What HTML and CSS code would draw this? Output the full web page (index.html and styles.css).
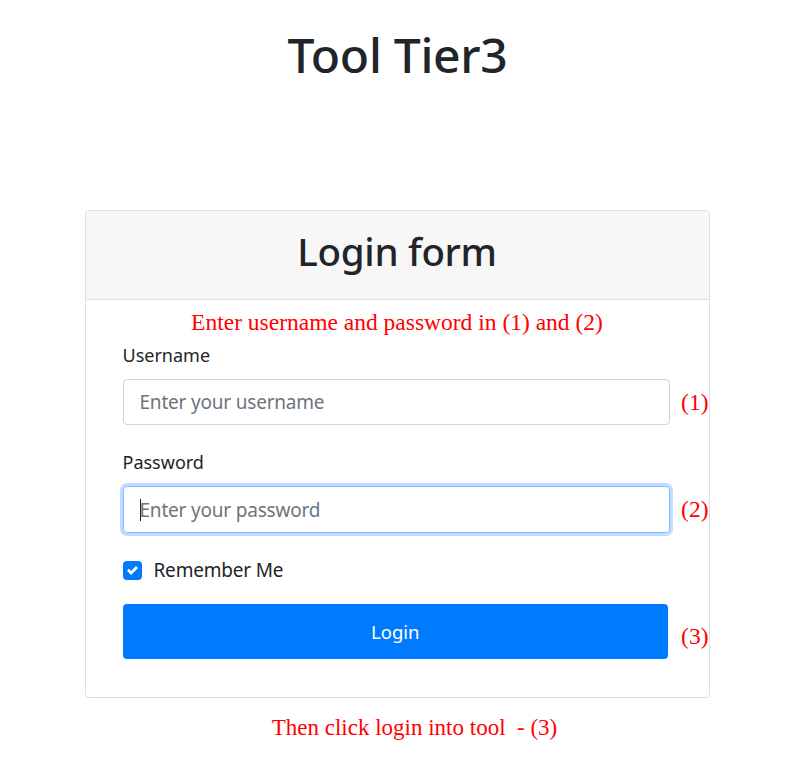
FILE: index.html
```html
<!DOCTYPE html>
<html>
<head>
<meta charset="utf-8">
<link rel="stylesheet" href="styles.css">
</head>
<body>
<div class="page">
  <h1 class="title">Tool Tier3</h1>
  <div class="card">
    <div class="card-header"><h2 class="card-title">Login form</h2></div>
    <div class="card-body">
      <p class="hint">Enter username and password in (1) and (2)</p>
      <div class="group first">
        <label class="label">Username</label>
        <div class="row">
          <div class="input"><span class="placeholder">Enter your username</span></div>
          <span class="mark">(1)</span>
        </div>
      </div>
      <div class="group second">
        <label class="label">Password</label>
        <div class="row">
          <div class="input focus"><span class="caret"></span><span class="placeholder">Enter your password</span></div>
          <span class="mark">(2)</span>
        </div>
      </div>
      <div class="check-row">
        <span class="checkbox"><svg viewBox="0 0 8 8" width="11" height="11"><path d="M6.564.75l-3.59 3.612-1.538-1.55L0 4.26 2.974 7.25 8 2.193z" fill="#fff"/></svg></span>
        <span class="check-label">Remember Me</span>
      </div>
      <div class="row btn-row">
        <div class="btn">Login</div>
        <span class="mark mark3">(3)</span>
      </div>
    </div>
  </div>
  <p class="footer-hint">Then click login into tool&nbsp; - (3)</p>
</div>
</body>
</html>
```
FILE: styles.css
```css
html, body { margin: 0; padding: 0; background: #fff; }
body { font-family: "Noto Sans", "Open Sans", sans-serif; color: #212529; }
.page { width: 795px; display: flex; flex-direction: column; align-items: center; }
.title { margin: 22px 0 0; font-size: 48px; font-weight: 500; line-height: 66px; letter-spacing: -0.3px; }
.card { margin-top: 122px; margin-right: 1px; width: 623px; border: 1px solid #dedede; border-radius: 4px; }
.card-header { box-sizing: border-box; height: 89px; padding-bottom: 8px; background: #f7f7f7; border-bottom: 1px solid #dedede; display: flex; align-items: center; justify-content: center; border-radius: 4px 4px 0 0; }
.card-title { margin: 0; font-size: 38.5px; font-weight: 500; letter-spacing: -0.3px; }
.card-body { padding: 7px 0 38px 37px; }
.hint { margin: 0; text-align: center; padding-right: 37px; font-family: "Liberation Serif", serif; font-size: 23.5px; color: #f00; line-height: 30px; }
.group.first { margin-top: 3px; }
.group.second { margin-top: 22px; }
.label { display: block; font-size: 18px; line-height: 30px; margin-bottom: 9px; }
.row { display: flex; align-items: center; }
.input { box-sizing: border-box; width: 548px; height: 46px; border: 1px solid #ced4da; border-radius: 4px; display: flex; align-items: center; padding-left: 16px; }
.input.focus { height: 47px; border-color: #80bdff; box-shadow: 0 0 0 3px rgba(0,123,255,.25); }
.placeholder { font-size: 19px; color: #6c757d; letter-spacing: -0.2px; }
.caret { width: 1px; height: 22px; background: #212529; margin-right: -1px; }
.mark { margin-left: 11px; font-family: "Liberation Serif", serif; font-size: 23.5px; color: #f00; }
.check-row { display: flex; align-items: center; margin-top: 25px; height: 24px; }
.checkbox { width: 19px; height: 19px; background: #007bff; border-radius: 4px; display: flex; align-items: center; justify-content: center; }
.check-label { margin-left: 12px; font-size: 19px; letter-spacing: -0.2px; }
.btn-row { margin-top: 22px; }
.btn { width: 548px; height: 55px; background: #007bff; border-radius: 4px; color: #fff; font-size: 18.5px; display: flex; align-items: center; justify-content: center; }
.mark3 { margin-left: 13px; margin-top: 10px; }
.footer-hint { margin: 17px 0 0 34px; font-family: "Liberation Serif", serif; font-size: 23px; color: #f00; }
```
